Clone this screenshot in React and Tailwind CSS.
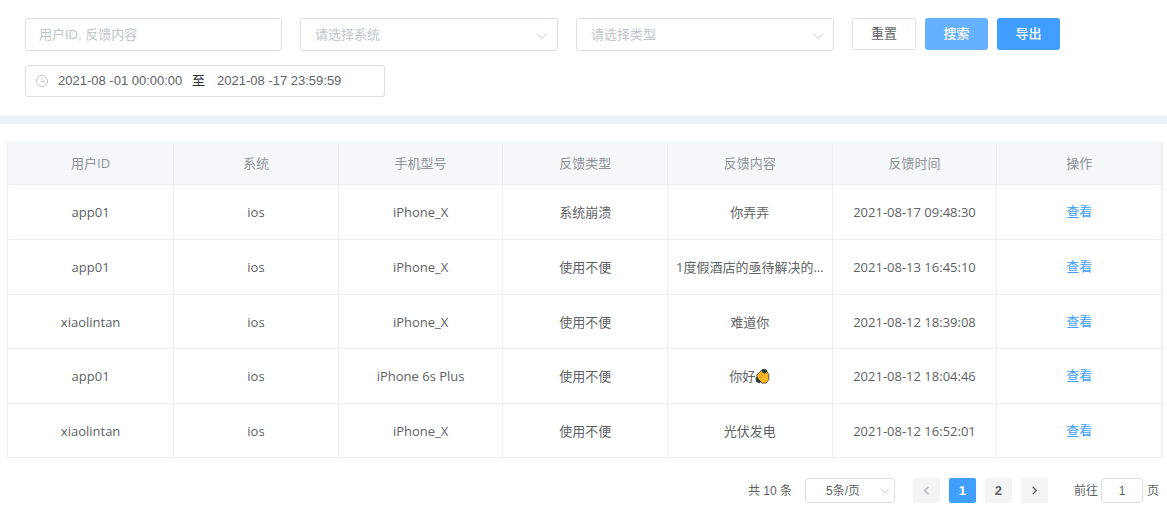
const columns = ["用户ID", "系统", "手机型号", "反馈类型", "反馈内容", "反馈时间", "操作"];

const rows = [
  ["app01", "ios", "iPhone_X", "系统崩溃", "你弄弄", "2021-08-17 09:48:30"],
  ["app01", "ios", "iPhone_X", "使用不便", "1度假酒店的亟待解决的...", "2021-08-13 16:45:10"],
  ["xiaolintan", "ios", "iPhone_X", "使用不便", "难道你", "2021-08-12 18:39:08"],
  ["app01", "ios", "iPhone 6s Plus", "使用不便", "你好👏", "2021-08-12 18:04:46"],
  ["xiaolintan", "ios", "iPhone_X", "使用不便", "光伏发电", "2021-08-12 16:52:01"],
];

function Chevron({ className, d = "M1 3.5 6 8.5 11 3.5" }) {
  return (
    <svg viewBox="0 0 12 12" aria-hidden="true" fill="none" stroke="currentColor" className={className}>
      <path d={d} />
    </svg>
  );
}

function Clap() {
  return (
    <svg viewBox="0 0 14 15" role="img" aria-label="👏" className="inline-block h-[15px] w-[15px] align-[-3px]">
      <path d="M6.4 0.9 9 0.3 11.2 1.6 11.5 4 8.5 5.5 6 3Z" fill="#17404a" stroke="#111" strokeWidth=".7" />
      <path d="M0.4 8.8 2.8 8.4 5.6 12.5 3.8 13.8 1 12.6Z" fill="#17404a" stroke="#111" strokeWidth=".7" />
      <path d="M1 6.2 5.8 1.8 9.3 4.4 11.4 2.6 13.3 5.4 13.3 10.6 10.6 14 7 14.3 3 10.6Z" fill="#fdb924" stroke="#222" strokeWidth=".7" strokeLinejoin="round" />
      <path d="M3.4 6.4 6.4 9.2M5.2 4.8 7.8 7.2" stroke="#a8701a" strokeWidth=".6" />
    </svg>
  );
}

function Filter({ label }) {
  return (
    <div className="relative min-w-0 max-w-[258px] flex-1">
      <select
        aria-label={label}
        defaultValue=""
        className="block h-[33px] w-full appearance-none rounded-[3px] border border-[#dcdfe6] bg-white pl-[14px] pr-8 text-[#c0c4cc]"
      >
        <option value="">{label}</option>
      </select>
      <Chevron className="pointer-events-none absolute right-[10px] top-3 size-3 text-[#c0c4cc]" />
    </div>
  );
}

export default function App() {
  return (
    <main className="bg-white font-['Liberation_Sans','Noto_Sans_CJK_SC',sans-serif] text-[13px] text-[#606266]">
      <form className="px-[25px] pb-[18px] pt-[18px]" onSubmit={(e) => e.preventDefault()}>
        <div className="flex items-start gap-[18px]">
          <input
            aria-label="用户ID, 反馈内容"
            placeholder="用户ID, 反馈内容"
            className="h-[33px] min-w-0 max-w-[257px] flex-1 rounded-[3px] border border-[#dcdfe6] px-[13px] placeholder:text-[#c0c4cc]"
          />
          <Filter label="请选择系统" />
          <Filter label="请选择类型" />
          <div className="flex shrink-0 gap-[9px] text-white">
            <button type="reset" className="h-8 w-16 rounded-[3px] border border-[#dcdfe6] bg-white pb-px text-[#606266]">重置</button>
            <button type="submit" className="h-8 w-[63px] rounded-[3px] bg-[#66b1ff] pb-px font-medium">搜索</button>
            <button type="button" className="h-8 w-[63px] rounded-[3px] bg-[#409eff] pb-px font-medium">导出</button>
          </div>
        </div>
        <div className="mt-[14px] flex h-8 w-[360px] max-w-full items-center rounded-[3px] border border-[#dcdfe6] pl-[9px]">
          <svg viewBox="0 0 14 14" aria-hidden="true" fill="none" stroke="#c0c4cc" className="size-[14px] shrink-0">
            <circle cx="7" cy="7" r="5.5" />
            <path d="M7 3.5V7.5H10" />
          </svg>
          <input aria-label="开始时间" defaultValue="2021-08 -01 00:00:00" className="ml-[9px] w-[126px] min-w-0" />
          <span className="ml-2 text-[#303133]">至</span>
          <input aria-label="结束时间" defaultValue="2021-08 -17 23:59:59" className="ml-3 w-[126px] min-w-0" />
        </div>
      </form>

      <div className="h-[9px] bg-[#f0f1f5]" />

      <section className="pb-3 pl-[7px] pr-1 pt-[18px]">
        <table className="w-full table-fixed border-separate border-spacing-0 border-x border-t border-[#ebeef5] text-center font-['Open_Sans','Noto_Sans_CJK_SC',sans-serif]">
          <thead className="bg-[#f5f7fa] text-[#909399]">
            <tr className="h-[42px]">
              {columns.map((c) => (
                <th key={c} scope="col" className="border-b border-r border-[#ebeef5] p-0 pt-px font-normal first:w-[14.4%]">{c}</th>
              ))}
            </tr>
          </thead>
          <tbody>
            {rows.map((row, i) => (
              <tr key={i} className="h-[55px] nth-3:h-[54px] nth-5:h-[54px]">
                {row.map((cell, j) => (
                  <td key={j} className="truncate border-b border-r border-[#ebeef5] px-[5px] pb-0 pt-[2px]">
                    {cell.endsWith("👏") ? <>{cell.replace("👏", "")}<Clap /></> : cell}
                  </td>
                ))}
                <td className="border-b border-r border-[#ebeef5] p-0">
                  <button type="button" className="text-[#409eff]">查看</button>
                </td>
              </tr>
            ))}
          </tbody>
        </table>

        <nav aria-label="分页" className="mt-5 flex items-center justify-end pr-1 text-xs">
          <span>共 10 条</span>
          <div className="relative ml-[13px]">
            <select aria-label="每页条数" className="block h-[25px] w-[90px] appearance-none rounded-[3px] border border-[#dcdfe6] bg-white pl-5 pr-6">
              <option>5条/页</option>
            </select>
            <Chevron className="pointer-events-none absolute right-[5px] top-2 size-[10px] text-[#c0c4cc]" />
          </div>
          <div className="ml-[18px] flex gap-[9px] text-[13px] font-bold">
            <button type="button" aria-label="上一页" disabled className="flex h-[25px] w-[27px] items-center justify-center rounded-[2px] bg-[#f4f4f5] text-[#c0c4cc]">
              <Chevron d="M8 2 4 6 8 10" className="size-[11px] stroke-2" />
            </button>
            <button type="button" aria-current="page" className="h-[25px] w-[27px] rounded-[2px] bg-[#409eff] text-white">1</button>
            <button type="button" className="h-[25px] w-[27px] rounded-[2px] bg-[#f4f4f5]">2</button>
            <button type="button" aria-label="下一页" className="flex h-[25px] w-[27px] items-center justify-center rounded-[2px] bg-[#f4f4f5]">
              <Chevron d="M4 2 8 6 4 10" className="size-[11px] stroke-[1.5]" />
            </button>
          </div>
          <label className="ml-[26px] flex items-center gap-[3px]">
            前往
            <input aria-label="页码" defaultValue="1" className="h-[25px] w-[42px] rounded-[3px] border border-[#dcdfe6] text-center" />
            <span className="pl-px">页</span>
          </label>
        </nav>
      </section>
    </main>
  );
}
